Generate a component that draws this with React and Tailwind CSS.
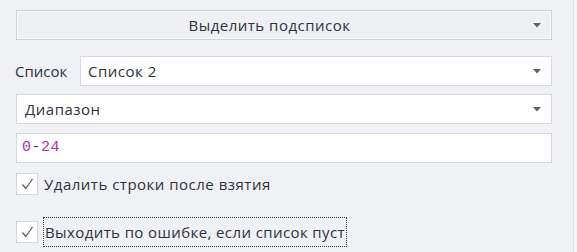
import React from 'react';

const Arrow = () => (
  <svg width="8" height="5" viewBox="0 0 8 5" className="shrink-0">
    <path d="M0 0 H8 L4 4.5 Z" fill="#5f6168" />
  </svg>
);

const CheckBox = () => (
  <div className="w-[22px] h-[22px] bg-white border border-[#d3d6de] flex items-center justify-center shrink-0">
    <svg width="13" height="12" viewBox="0 0 13 12">
      <path d="M1.5 6.5 L4.8 10.5 L11.5 1" fill="none" stroke="#55575e" strokeWidth="1.2" />
    </svg>
  </div>
);

export default function App() {
  return (
    <div
      className="w-[577px] h-[252px] bg-[#f0f1f5] flex text-[15px] tracking-[0.5px] text-[#2f3140]"
      style={{ fontFamily: '"Open Sans", "Noto Sans", sans-serif' }}
    >
      <div className="flex-1 flex flex-col pl-4 pr-[21px] pt-[10px]">
        {/* Top dropdown button */}
        <div className="h-[30px] bg-[#eef0f4] border border-[#d0d3db] shadow-[inset_0_0_0_1px_#f7f8fa] flex items-center">
          <span className="flex-1 text-center">Выделить подсписок</span>
          <div className="pl-[11px] pr-[10px] flex items-center">
            <Arrow />
          </div>
        </div>

        {/* List selector */}
        <div className="mt-4 flex items-center">
          <span className="w-[65px] shrink-0 -ml-px tracking-normal">Список</span>
          <div className="flex-1 h-[30px] bg-white border border-[#d6d9e0] flex items-center pl-[7px] pr-[10px]">
            <span className="flex-1">Список 2</span>
            <Arrow />
          </div>
        </div>

        {/* Range mode */}
        <div className="mt-2 h-[30px] bg-white border border-[#d6d9e0] flex items-center pl-[8px] pr-[10px]">
          <span className="flex-1">Диапазон</span>
          <Arrow />
        </div>

        {/* Range input */}
        <div className="mt-[9px] h-[30px] bg-white border border-[#d6d9e0] flex items-center pl-[5px]">
          <span
            className="text-[15px] tracking-[0.5px]"
            style={{ fontFamily: '"Liberation Mono", monospace' }}
          >
            <span className="text-[#b12fb2]">0</span>
            <span className="text-[#5a3a6a]">-</span>
            <span className="text-[#b12fb2]">24</span>
          </span>
        </div>

        {/* Checkboxes */}
        <div className="mt-[10px] flex items-center gap-[6px]">
          <CheckBox />
          <span>Удалить строки после взятия</span>
        </div>

        <div className="mt-[21px] flex items-center gap-[5px]">
          <CheckBox />
          <span className="border border-dotted border-[#3a3a3a] px-px leading-[28px] tracking-[0.4px]">
            Выходить по ошибке, если список пуст
          </span>
        </div>
      </div>
      <div className="w-px bg-[#dfe1e7]" />
      <div className="w-[3px] bg-[#f4f5f8]" />
    </div>
  );
}
